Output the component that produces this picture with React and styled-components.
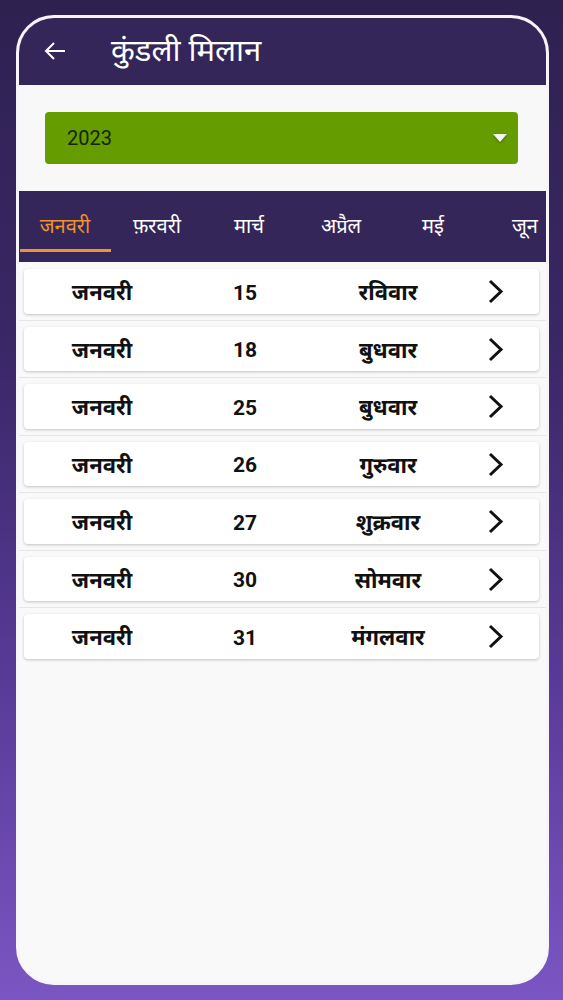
import React from "react";
import styled, { createGlobalStyle } from "styled-components";

const GlobalStyle = createGlobalStyle`
  html, body {
    margin: 0;
    padding: 0;
  }
  body {
    width: 563px;
    height: 1000px;
    overflow: hidden;
    background: linear-gradient(180deg, #2e2150 0%, #3a2766 35%, #5a3c9a 70%, #7b56c3 100%);
    font-family: "Noto Sans", Roboto, "Open Sans", sans-serif;
  }
`;

const Screen = styled.div`
  padding: 15px 14px 15px 16px;
`;

const Phone = styled.div`
  width: 527px;
  height: 964px;
  border: 3px solid #f7f5fa;
  border-radius: 38px;
  overflow: hidden;
  background: #faf9fa;
  display: flex;
  flex-direction: column;
`;

const Header = styled.header`
  height: 67px;
  background: #35265a;
  display: flex;
  align-items: center;
  padding-left: 24px;
  gap: 44px;
  flex-shrink: 0;
`;

const BackButton = styled.button`
  border: none;
  background: none;
  padding: 0;
  width: 24px;
  height: 24px;
  display: flex;
  align-items: center;
  justify-content: center;
  color: #fff;
  margin-top: -2px;
`;

const Title = styled.h1`
  margin: 0;
  color: #ffffff;
  font-size: 31px;
  font-weight: 400;
  margin-top: -6px;
`;

const YearArea = styled.div`
  padding: 27px 28px 27px 26px;
  background: #f9f8f9;
`;

const Select = styled.div`
  height: 52px;
  background: #659c00;
  border-radius: 4px;
  display: flex;
  align-items: center;
  justify-content: space-between;
  padding: 0 11px 0 22px;
`;

const SelectValue = styled.span`
  font-family: Roboto, "Liberation Sans", sans-serif;
  font-size: 20px;
  color: #152300;
`;

const Caret = styled.span`
  width: 0;
  height: 0;
  border-left: 7px solid transparent;
  border-right: 7px solid transparent;
  border-top: 8px solid #f4f6ee;
  filter: drop-shadow(0 1px 1px rgba(0, 0, 0, 0.35));
`;

const Tabs = styled.nav`
  height: 71px;
  background: #35265a;
  display: flex;
  flex-shrink: 0;
  overflow: hidden;
`;

const Tab = styled.div`
  flex: 0 0 92px;
  display: flex;
  align-items: center;
  justify-content: center;
  position: relative;
  font-size: 20px;
  color: ${(p) => (p.$active ? "#f0922e" : "#ffffff")};
  padding-bottom: 3px;
  box-sizing: border-box;
  white-space: nowrap;

  &::after {
    content: "";
    display: ${(p) => (p.$active ? "block" : "none")};
    position: absolute;
    left: 1px;
    right: 0;
    bottom: 10px;
    height: 3px;
    background: #f0922e;
  }
`;

const List = styled.div`
  display: flex;
  flex-direction: column;
  padding-top: 1px;
`;

const RowWrap = styled.div`
  padding: 6px 7px 6px 5px;
  border-bottom: 1px solid #e6e5e7;
  &:last-child {
    border-bottom: none;
  }
`;

const Card = styled.div`
  height: 44.5px;
  background: #ffffff;
  border-radius: 4px;
  box-shadow: 0 1px 3px rgba(0, 0, 0, 0.22);
  display: grid;
  grid-template-columns: 156px 130px 156px 60px;
  align-items: center;
`;

const Cell = styled.span`
  text-align: center;
  font-size: ${(p) => (p.$num ? "21px" : "22px")};
  font-weight: 700;
  color: #111;
  padding-top: ${(p) => (p.$num ? "3px" : "0")};
  font-family: ${(p) => (p.$num ? 'Roboto, "Liberation Sans", sans-serif' : '"Noto Sans", sans-serif')};
`;

const Chevron = styled.span`
  display: flex;
  justify-content: center;
  color: #111;
  padding-top: 1px;
`;

const tabs = ["जनवरी", "फ़रवरी", "मार्च", "अप्रैल", "मई", "जून"];

const rows = [
  ["15", "रविवार"],
  ["18", "बुधवार"],
  ["25", "बुधवार"],
  ["26", "गुरुवार"],
  ["27", "शुक्रवार"],
  ["30", "सोमवार"],
  ["31", "मंगलवार"],
];

export default function App() {
  return (
    <>
      <GlobalStyle />
      <Screen>
        <Phone>
          <Header>
            <BackButton aria-label="back">
              <svg width="22" height="20" viewBox="0 0 22 20" fill="none">
                <path d="M21 10H2M10 2L2 10l8 8" stroke="#fff" strokeWidth="2" />
              </svg>
            </BackButton>
            <Title>कुंडली मिलान</Title>
          </Header>
          <YearArea>
            <Select>
              <SelectValue>2023</SelectValue>
              <Caret />
            </Select>
          </YearArea>
          <Tabs>
            {tabs.map((t, i) => (
              <Tab key={t} $active={i === 0}>
                {t}
              </Tab>
            ))}
          </Tabs>
          <List>
            {rows.map(([d, w]) => (
              <RowWrap key={d}>
                <Card>
                  <Cell>जनवरी</Cell>
                  <Cell $num>{d}</Cell>
                  <Cell>{w}</Cell>
                  <Chevron>
                    <svg width="16" height="25" viewBox="0 0 16 25" fill="none">
                      <path d="M2 2l11 10.5L2 23" stroke="#111" strokeWidth="3" />
                    </svg>
                  </Chevron>
                </Card>
              </RowWrap>
            ))}
          </List>
        </Phone>
      </Screen>
    </>
  );
}
